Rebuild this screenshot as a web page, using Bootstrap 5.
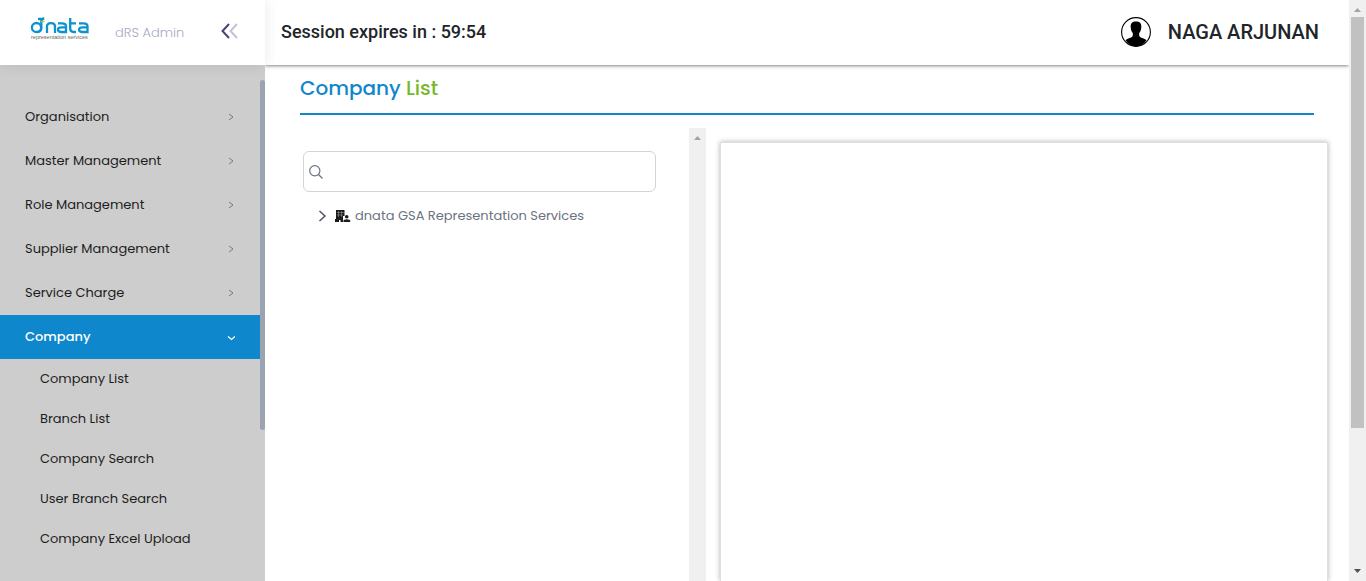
<!DOCTYPE html>
<html lang="en">
<head>
<meta charset="utf-8">
<meta name="viewport" content="width=device-width, initial-scale=1">
<title>dRS Admin - Company List</title>
<link href="https://cdn.jsdelivr.net/npm/bootstrap@5.3.0/dist/css/bootstrap.min.css" rel="stylesheet">
<style>
  :root { --brand: #0f87cc; --leaf: #76b82a; --ui: Poppins, Inter, "Open Sans", sans-serif; }
  body { font-family: var(--ui); font-size: 13px; line-height: 20px; color: #212529; background: #fff; }
  .sidebar { width: 265px; background: #cdcdcd; }
  .brand-bar { height: 65px; background: #fff; box-shadow: 0 1px 12px rgba(69, 65, 78, .12); padding: 0 27px 0 30px; }
  .brand-name { color: #a6a9c4; font-weight: 300; margin: 0 auto 0 25px; }
  .side-menu { padding-top: 30px; width: 260px; }
  .side-menu a { color: #1d1d1d; text-decoration: none; height: 44px; padding: 0 25px; }
  .side-menu a.open { background: var(--brand); color: #fff; font-weight: 500; }
  .side-menu .sub a { height: 40px; padding-left: 40px; }
  .side-thumb { width: 5px; height: 350px; margin-top: 15px; background: #9ca3b0; border-radius: 3px; }
  .topbar { height: 65px; padding: 0 30px 2px 16px; font-family: Roboto, sans-serif; font-weight: 500; box-shadow: 0 0 4px rgba(0, 0, 0, .75); clip-path: inset(0 0 -8px 0); }
  .session { font-size: 18px; }
  .user-name { font-size: 20px; }
  .content-pane { padding: 8px 20px 0 35px; }
  .page-title { font-size: 20px; line-height: 30px; font-weight: 500; color: var(--brand); border-bottom: 2px solid var(--brand); margin: 0 15px 13px 0; padding-bottom: 10px; }
  .page-title span { color: var(--leaf); }
  .tree-column { width: 39.5%; }
  .tree-pane { padding: 23px 33px 0 3px; }
  .search-box { height: 41px; border: 1px solid #d1d5db; border-radius: 6px; padding: 0 5px; }
  .search-box input { outline: 0; background: none; }
  .tree-node { color: #6b7280; padding: 14px 0 0 15px; }
  .track { width: 17px; background: #f0f0f0; }
  .page-thumb { background: #c1c1c1; width: 13px; height: 411px; }
  .detail-pane { margin: 14px 1px 0 14px; border: 1px solid #dcdfe4; border-bottom: 0; box-shadow: 0 0 5px rgba(0, 0, 0, .3); }
  svg { display: block; flex-shrink: 0; }
</style>
</head>
<body>
<div class="d-flex vh-100 overflow-hidden">
  <aside class="sidebar d-flex flex-column flex-shrink-0">
    <div class="brand-bar d-flex align-items-center flex-shrink-0">
      <svg class="mb-2" width="60" height="26" viewBox="0 0 60 26" role="img" aria-label="dnata representation services">
        <g fill="none" stroke="#0b93d0" stroke-width="2.300">
          <ellipse cx="6.500" cy="11.500" rx="4.600" ry="4.500"/><path d="M11.300 12.500V5.500q0-3 3-3M11.300 11v1.500a3.500 3.500 0 0 1-3.500 3.500M8 3h4"/>
          <path d="M17 17v-6.400q0-3.400 4-3.400t4 3.400V17"/>
          <path d="M28 7.300h4q4 0 4 3V16h-4.500q-3.500 0-3.500-2.300t3.500-2.300H36"/>
          <path d="M40.200 2v10.500q0 3.500 3.500 3.500H46M40 7.300h6"/>
          <path d="M49 7.300h4.500q4 0 4 3V16h-4.500q-4 0-4-2.300t4-2.300h4.500"/>
        </g>
        <path d="M11 5.500h3.500" stroke="#a5c83b" stroke-width="1.500"/>
        <text x="1" y="23" font-size="5.500" font-family="Liberation Sans, sans-serif" fill="#666">representation services</text>
      </svg>
      <span class="brand-name">dRS Admin</span>
      <button class="btn p-0 border-0" type="button" aria-label="Collapse menu">
        <svg class="mb-1" width="18" height="16" viewBox="0 0 18 16" fill="none" stroke-width="2"><path d="M9 1 2.500 8 9 15" stroke="#45457c"/><path d="M17 1 10.500 8l6.500 7" stroke="#c3c3d6"/></svg>
      </button>
    </div>
    <div class="d-flex flex-fill align-items-start">
      <nav class="side-menu">
        <a class="d-flex align-items-center justify-content-between" href="#">Organisation <svg width="8" height="8" viewBox="0 0 8 8" fill="none" stroke="#78788f"><path d="m2 1 4 3-4 3"/></svg></a>
        <a class="d-flex align-items-center justify-content-between" href="#">Master Management <svg width="8" height="8" viewBox="0 0 8 8" fill="none" stroke="#78788f"><path d="m2 1 4 3-4 3"/></svg></a>
        <a class="d-flex align-items-center justify-content-between" href="#">Role Management <svg width="8" height="8" viewBox="0 0 8 8" fill="none" stroke="#78788f"><path d="m2 1 4 3-4 3"/></svg></a>
        <a class="d-flex align-items-center justify-content-between" href="#">Supplier Management <svg width="8" height="8" viewBox="0 0 8 8" fill="none" stroke="#78788f"><path d="m2 1 4 3-4 3"/></svg></a>
        <a class="d-flex align-items-center justify-content-between" href="#">Service Charge <svg width="8" height="8" viewBox="0 0 8 8" fill="none" stroke="#78788f"><path d="m2 1 4 3-4 3"/></svg></a>
        <a class="open d-flex align-items-center justify-content-between" href="#">Company <svg width="8" height="8" viewBox="0 0 8 8" fill="none" stroke="#fff" stroke-width="1.300"><path d="m1 3.500 3.500 3L8 3.500"/></svg></a>
        <div class="sub">
          <a class="d-flex align-items-center" href="#">Company List</a>
          <a class="d-flex align-items-center" href="#">Branch List</a>
          <a class="d-flex align-items-center" href="#">Company Search</a>
          <a class="d-flex align-items-center" href="#">User Branch Search</a>
          <a class="d-flex align-items-center" href="#">Company Excel Upload</a>
        </div>
      </nav>
      <div class="side-thumb"></div>
    </div>
  </aside>

  <main class="d-flex flex-column flex-fill">
    <header class="topbar d-flex align-items-center justify-content-between flex-shrink-0">
      <span class="session">Session expires in : 59:54</span>
      <div class="d-flex align-items-center">
        <svg width="32" height="32" viewBox="0 0 32 32"><circle cx="16" cy="16" r="14.400" fill="#fff" stroke="#000" stroke-width="1.100"/><path d="M16 5.500c4 0 5.600 2 5.300 5.700-.2 2-.6 4-1.800 5.500-.5.600-.5 2 0 3.600.5 1.600 5 2 7 4A13.500 13.500 0 0 1 16 30.500 13.500 13.500 0 0 1 5.500 24.300c2-2 6.500-2.400 7-4 .5-1.600.5-3 0-3.600-1.200-1.500-1.600-3.500-1.800-5.500-.3-3.700 1.300-5.700 5.300-5.700z"/></svg>
        <span class="user-name ms-3">NAGA ARJUNAN</span>
      </div>
    </header>
    <div class="content-pane d-flex flex-column flex-fill">
      <h1 class="page-title">Company <span>List</span></h1>
      <div class="d-flex flex-fill">
        <div class="tree-column d-flex flex-shrink-0">
          <section class="tree-pane flex-fill">
            <label class="search-box d-flex align-items-center w-100" aria-label="Search companies">
              <svg width="14" height="14" viewBox="0 0 14 14" fill="none" stroke="#6b7280" stroke-width="1.200"><circle cx="5.800" cy="5.800" r="5.100"/><path d="m9.500 9.500 4 4"/></svg>
              <input class="border-0 flex-fill ms-2" type="text" aria-label="Search companies">
            </label>
            <div class="tree-node d-flex align-items-center">
              <svg width="9" height="12" viewBox="0 0 9 12" fill="none" stroke="#4b5563" stroke-width="1.500"><path d="m1.500 1 5.500 5-5.500 5"/></svg>
              <svg class="ms-2" width="16" height="13" viewBox="0 0 16 13"><path d="M1 0h8.500v6H8v6H5.500v-2H4v2H0V9h1z" fill="#1b1b1b"/><path d="M2 2.500h7M2 5h6M3.500 1v6M6.500 1v6" stroke="#aaa" stroke-width=".5"/><circle cx="11.700" cy="6.700" r="1.800" fill="#1b1b1b"/><path d="M8.500 12v-1.300q0-1.500 3.300-1.500t3.400 1.500V12z" fill="#1b1b1b"/></svg>
              <span class="ms-1">dnata GSA Representation Services</span>
            </div>
          </section>
          <div class="track pt-1 flex-shrink-0"><svg class="mx-auto mt-1" width="7" height="4"><path d="M0 4 3.500 0 7 4z" fill="#a3a3a3"/></svg></div>
        </div>
        <section class="flex-fill detail-pane" aria-label="Company details"></section>
      </div>
    </div>
  </main>

  <div class="track d-flex flex-column align-items-center flex-shrink-0">
    <svg class="mt-2 mb-1" width="7" height="5"><path d="M0 4 3.500 0 7 4z" fill="#a3a3a3"/></svg>
    <div class="page-thumb"></div>
    <svg class="mt-auto mb-1" width="7" height="8"><path d="M0 0h7L3.500 4z" fill="#505050"/></svg>
  </div>
</div>
<script src="https://cdn.jsdelivr.net/npm/bootstrap@5.3.0/dist/js/bootstrap.bundle.min.js"></script>
</body>
</html>
